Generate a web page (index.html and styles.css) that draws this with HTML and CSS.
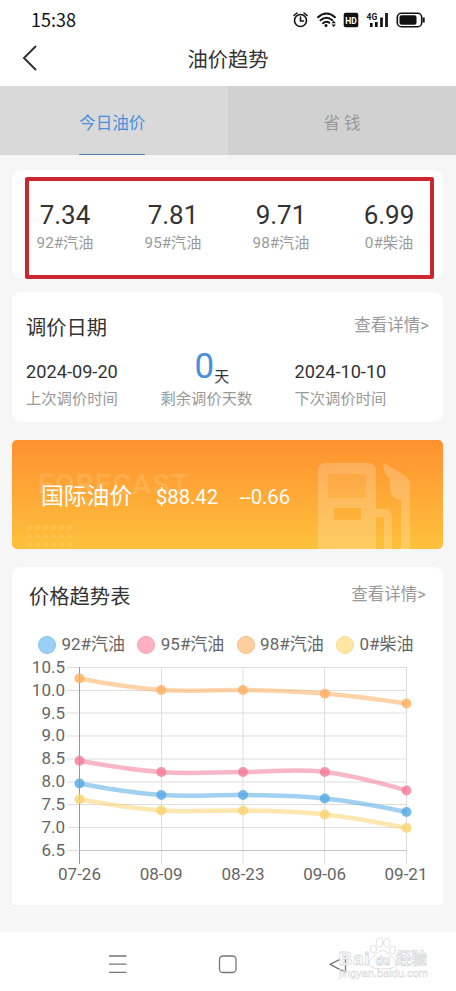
FILE: index.html
```html
<!DOCTYPE html>
<html lang="zh-CN">
<head>
<meta charset="utf-8">
<title>油价趋势</title>
<link rel="stylesheet" href="styles.css">
</head>
<body>
<div class="status">
  <span class="clock">15:38</span>
  <svg class="status-icons" viewBox="292 8 136 24" width="136" height="24">
    <g fill="none" stroke="#111" stroke-width="1.6" stroke-linecap="round">
      <circle cx="300.5" cy="20.5" r="6"/>
      <path d="M300.5 17v4h3M294 15.5l3-2.5M307 15.500l-3-2.500"/>
      <path stroke-width="2" d="M318 17.200Q326.500 9.800 335 17.200M320.500 20.300Q326.500 15.300 332.300 20.200M323 23.200Q326.300 20.600 329.300 22.800"/>
    </g>
    <circle cx="326" cy="25.500" r="1.500" fill="#111"/>
    <path d="M331.500 23.300l2.200-2.500 2.200 2.500zM331.500 24.600l2.200 2.500 2.200-2.500z" fill="#111"/>
    <rect x="343.700" y="12.700" width="14.600" height="14.600" rx="2" fill="#111"/>
    <text x="351" y="23.500" class="hd">HD</text>
    <text x="366.500" y="19.500" class="net">4G</text>
    <path d="M371.300 27v-4M376.300 27v-5M381.500 27v-9.500M386.500 27v-14" stroke="#111" stroke-width="2.700"/>
    <rect x="397.300" y="13.300" width="24.400" height="13.400" rx="4" fill="none" stroke="#111" stroke-width="1.600"/>
    <rect x="399.500" y="15.300" width="17" height="9.400" rx="2" fill="#111"/>
    <path d="M423.700 17.500v5" stroke="#111" stroke-width="2"/>
  </svg>
</div>
<header class="header">
  <svg class="back" viewBox="0 0 16 28" width="16" height="28"><path d="M14 2L2 14l12 12" fill="none" stroke="#333" stroke-width="2"/></svg>
  <h1>油价趋势</h1>
</header>
<nav class="tabs">
  <div class="tab active"><span>今日油价</span></div>
  <div class="tab"><span>省 钱</span></div>
</nav>
<main>
  <section class="card prices">
    <div><b>7.34</b><small>92#汽油</small></div>
    <div><b>7.81</b><small>95#汽油</small></div>
    <div><b>9.71</b><small>98#汽油</small></div>
    <div><b>6.99</b><small>0#柴油</small></div>
    <i class="highlight"></i>
  </section>
  <section class="card schedule">
    <div class="card-head"><h2>调价日期</h2><a>查看详情&gt;</a></div>
    <div class="dates">
      <div><b>2024-09-20</b><small>上次调价时间</small></div>
      <div class="remain"><p><strong>0</strong><span>天</span></p><small>剩余调价天数</small></div>
      <div><b>2024-10-10</b><small>下次调价时间</small></div>
    </div>
  </section>
  <section class="banner">
    <svg class="banner-art" viewBox="12 440 431 109" width="431" height="109">
      <defs>
        <pattern id="dots" x="26.500" y="525" width="8" height="8.500" patternUnits="userSpaceOnUse"><circle cx="3" cy="3" r="2.200" fill="#fff" opacity=".11"/></pattern>
      </defs>
      <text x="38" y="493.500" class="forecast" textLength="150">FORECAST</text>
      <rect x="26.500" y="525" width="46" height="24" fill="url(#dots)"/>
      <g fill="#fff" opacity=".2">
        <path fill-rule="evenodd" d="M318 549V471q0-8 8-8h42q8 0 8 8v38h7q9 0 9 9v31h-8v-29q0-3-3-3h-5v32zM328 474v24h38v-24zM334 508v12h27v-12z"/>
        <rect x="328" y="474" width="38" height="24" opacity=".45"/>
        <path d="M384 463l20 12q6 4 6 10v64h-9v-49q-10-1-11-10v-11q-6-4-7-14z"/>
      </g>
    </svg>
    <div class="quote"><h2>国际油价</h2><span>$88.42</span><span>--0.66</span></div>
  </section>
  <section class="card trend">
    <div class="card-head"><h2>价格趋势表</h2><a>查看详情&gt;</a></div>
    <div class="legend">
      <span><i class="blue"></i>92#汽油</span><span><i class="pink"></i>95#汽油</span><span><i class="orange"></i>98#汽油</span><span><i class="yellow"></i>0#柴油</span>
    </div>
    <svg class="chart" viewBox="12 655 431 235" width="431" height="235">
      <path class="grid" d="M67 667.500H406.500M67 690.500H406.500M67 713H406.500M67 736H406.500M67 759H406.500M67 782H406.500M67 804.500H406.500M67 827.500H406.500M67 850.500H80M161.500 667V864M243 667V864M324.500 667V864M406.500 667V864"/>
      <path class="axis" d="M79.500 667V864"/><path class="base" d="M79.500 850.500H406.500"/>
      <g class="ylabels">
        <text x="65" y="672.500">10.5</text><text x="65" y="695.500">10.0</text><text x="65" y="718.500">9.5</text><text x="65" y="741.200">9.0</text><text x="65" y="764">8.5</text><text x="65" y="787">8.0</text><text x="65" y="810">7.5</text><text x="65" y="832.700">7.0</text><text x="65" y="855.500">6.5</text>
      </g>
      <g class="xlabels">
        <text x="79.500" y="880.200">07-26</text><text x="161.200" y="880.200">08-09</text><text x="243" y="880.200">08-23</text><text x="324.700" y="880.200">09-06</text><text x="406" y="880.200">09-21</text>
      </g>
      <g class="series s-yellow">
        <path d="M79.500 799.300C79.500 799.300 128.600 808.300 161.300 810.500C194 812.700 210.300 809.700 243 810.500C275.700 811.300 292.100 811 324.800 814.500C357.500 818 406.500 828 406.500 828"/>
        <circle cx="79.500" cy="799.300" r="5"/><circle cx="161.300" cy="810.500" r="5"/><circle cx="243" cy="810.500" r="5"/><circle cx="324.800" cy="814.500" r="5"/><circle cx="406.500" cy="828" r="5"/>
      </g>
      <g class="series s-orange">
        <path d="M79.500 678.500C79.500 678.500 128.600 687.700 161.300 690C194 692.300 210.300 689.300 243 690C275.700 690.700 292.100 690.800 324.800 693.500C357.500 696.200 406.500 703.500 406.500 703.500"/>
        <circle cx="79.500" cy="678.500" r="5"/><circle cx="161.300" cy="690" r="5"/><circle cx="243" cy="690" r="5"/><circle cx="324.800" cy="693.800" r="5"/><circle cx="406.500" cy="703.500" r="5"/>
      </g>
      <g class="series s-pink">
        <path d="M79.500 760.700C79.500 760.700 128.600 769.700 161.300 772C194 774.300 210.300 772 243 772C275.700 772 292.100 768.300 324.800 772C357.500 775.700 406.500 790.500 406.500 790.500"/>
        <circle cx="79.500" cy="760.700" r="5"/><circle cx="161.300" cy="772" r="5"/><circle cx="243" cy="772" r="5"/><circle cx="324.800" cy="772" r="5"/><circle cx="406.500" cy="790.500" r="5"/>
      </g>
      <g class="series s-blue">
        <path d="M79.500 783.500C79.500 783.500 128.600 792.700 161.300 795C194 797.300 210.300 794.300 243 795C275.700 795.700 292.100 795.100 324.800 798.500C357.500 801.900 406.500 812 406.500 812"/>
        <circle cx="79.500" cy="783.500" r="5"/><circle cx="161.300" cy="795" r="5"/><circle cx="243" cy="795" r="5"/><circle cx="324.800" cy="798.500" r="5"/><circle cx="406.500" cy="812" r="5"/>
      </g>
    </svg>
  </section>
</main>
<footer class="sysnav">
  <svg viewBox="0 932 456 59" width="456" height="59">
    <g fill="none" stroke="#777" stroke-width="1.300">
      <path d="M109 956H126.500M109 964.200H126.500M109 972.400H126.500"/>
      <rect x="219.500" y="956" width="16.500" height="16.500" rx="3.500"/>
      <path d="M345.500 956.500V972.300L330 964.400Z" stroke-linejoin="round"/>
    </g>
    <g class="mark">
      <text x="338.500" y="965" class="mark-latin" textLength="31">Bai</text>
      <path d="M371 959q3-3 6-6 5-5 11 0 4 4 6 6 4 5 0 8-3 2-11.500 2t-11.500-2q-4-3 0-8z"/>
      <ellipse cx="373.500" cy="949" rx="3" ry="4"/><ellipse cx="379.500" cy="942.500" rx="3.200" ry="4.400"/><ellipse cx="387" cy="943" rx="3.200" ry="4.400"/><ellipse cx="392.500" cy="950" rx="3" ry="4"/>
      <text x="375.500" y="964.500" class="mark-du">du</text>
      <text x="396" y="964" class="mark-cn">经验</text>
      <text x="339" y="977" class="mark-url" textLength="89">jingyan.baidu.com</text>
    </g>
  </svg>
</footer>
</body>
</html>
```
FILE: styles.css
```css
* { box-sizing: border-box; margin: 0; padding: 0; }
body { width: 456px; height: 991px; background: #f6f6f6; color: #333; font-family: Roboto, "Noto Sans CJK SC", sans-serif; font-weight: 400; overflow: hidden; }
h1, h2, b, strong { font-weight: 400; }
i { font-style: normal; }
.status { height: 40px; background: #fff; display: flex; justify-content: space-between; align-items: center; padding: 0 28px 0 31px; }
.clock { font-family: "Noto Sans CJK SC", sans-serif; font-size: 18px; line-height: 24px; height: 26px; color: #111; }
.status-icons { display: block; }
.hd { font: 700 8.5px Roboto, sans-serif; fill: #fff; text-anchor: middle; }
.net { font: 700 8.5px Roboto, sans-serif; fill: #111; }
.header { height: 46px; background: #fff; display: grid; grid-template-columns: 60px 1fr 60px; align-items: center; padding-bottom: 10px; }
.back { margin-left: 22px; margin-top: -1px; }
.header h1 { font-size: 20.300px; line-height: 24px; text-align: center; padding-top: 3px; }
.tabs { height: 69px; display: flex; }
.tab { flex: 1; background: #d1d1d1; display: flex; justify-content: center; font-size: 16.500px; color: #999; }
.tab span { line-height: 75px; height: 69px; padding: 0 .5px; }
.tab.active { background: #d9d9d9; color: #4a8fd9; }
.tab.active span { border-bottom: 1.500px solid #4a7fba; padding-right: 0; margin-right: 4px; }
main { padding: 15px 13px 0 12px; height: 777px; display: flex; flex-direction: column; }
.card { background: #fff; border-radius: 9px; }
.prices { position: relative; height: 108px; display: grid; grid-template-columns: repeat(4, 108px); margin-bottom: 14px; padding-top: 29px; }
.prices div { text-align: center; margin-left: -2px; }
.prices b { display: block; font-size: 26px; line-height: 32px; }
.prices small { display: block; font-size: 15.200px; line-height: 24px; color: #999; }
.highlight { position: absolute; left: 13px; top: 7px; width: 409px; height: 102px; border: 4px solid #cc272f; border-radius: 2px; }
.card-head { display: flex; justify-content: space-between; align-items: flex-start; }
.card-head h2 { font-size: 20.300px; line-height: 28px; }
.card-head a { font-size: 16.500px; line-height: 24px; color: #999; }
.schedule { height: 130px; padding: 22px 14px 0; margin-bottom: 18px; }
.dates { display: grid; grid-template-columns: 134.500px 134px 134px; margin-top: 4px; }
.dates b { display: block; font-size: 18.200px; line-height: 52px; height: 41px; }
.dates small { display: block; font-size: 15.300px; line-height: 24px; color: #999; }
.remain p { height: 41px; display: flex; align-items: baseline; padding-left: 34px; line-height: 41px; }
.remain strong { font-size: 35px; color: #4a8fd9; }
.remain span { font-size: 15px; position: relative; top: 4px; }
.banner { position: relative; height: 109px; border-radius: 5px; overflow: hidden; background: linear-gradient(#ff9130, #fdc13c); margin-bottom: 18px; }
.banner-art { position: absolute; inset: 0; }
.forecast { font: 500 28px Roboto, sans-serif; fill: #fff; opacity: .13; }
.quote { position: relative; display: flex; align-items: baseline; padding: 41px 0 0 29px; color: #fff; line-height: 32px; }
.quote h2 { font-size: 22.800px; width: 115px; }
.quote span { font-size: 20.200px; width: 83.500px; }
.trend { height: 338px; border-radius: 9px 9px 3px 3px; }
.trend .card-head { padding: 16px 17px 0; height: 64px; }
.legend { display: flex; height: 24px; padding-left: 26px; font-size: 17px; line-height: 27px; color: #666; }
.legend span { display: flex; align-items: center; width: 99.300px; height: 27px; white-space: nowrap; }
.legend i { width: 18px; height: 18px; border-radius: 50%; margin-right: 5.500px; border: 1px solid; }
.legend .blue { background: #9ad0f5; border-color: #86c1ec; }
.legend .pink { background: #ffb1c1; border-color: #f5a0b4; }
.legend .orange { background: #ffcf9f; border-color: #f6bd85; }
.legend .yellow { background: #ffe6a3; border-color: #f7dc90; }
.chart { display: block; }
.chart text { font-size: 17px; fill: #666; }
.ylabels { text-anchor: end; }
.xlabels { text-anchor: middle; }
.grid { stroke: #dedede; stroke-width: 1; }
.axis { stroke: #999; stroke-width: 1; }
.base { stroke: #c4c4c4; stroke-width: 1; }
.series path { fill: none; stroke: currentColor; stroke-width: 4.500; opacity: .55; }
.series circle { fill: currentColor; opacity: .8; }
.s-blue { color: #55a9e4; }
.s-pink { color: #f27c98; }
.s-orange { color: #fbaf5f; }
.s-yellow { color: #fad371; }
.sysnav { height: 59px; background: #fff; }
.sysnav svg { display: block; }
.mark { fill: #fff; stroke: #d8d8d8; stroke-width: .8; }
.mark-latin { font: 700 19px "Liberation Sans", sans-serif; }
.mark-du { font: 700 12px "Liberation Sans", sans-serif; }
.mark-cn { font: 700 15.500px "Noto Sans CJK SC", sans-serif; }
.mark-url { font: 400 11px "Liberation Sans", sans-serif; stroke-width: .5; }
```
